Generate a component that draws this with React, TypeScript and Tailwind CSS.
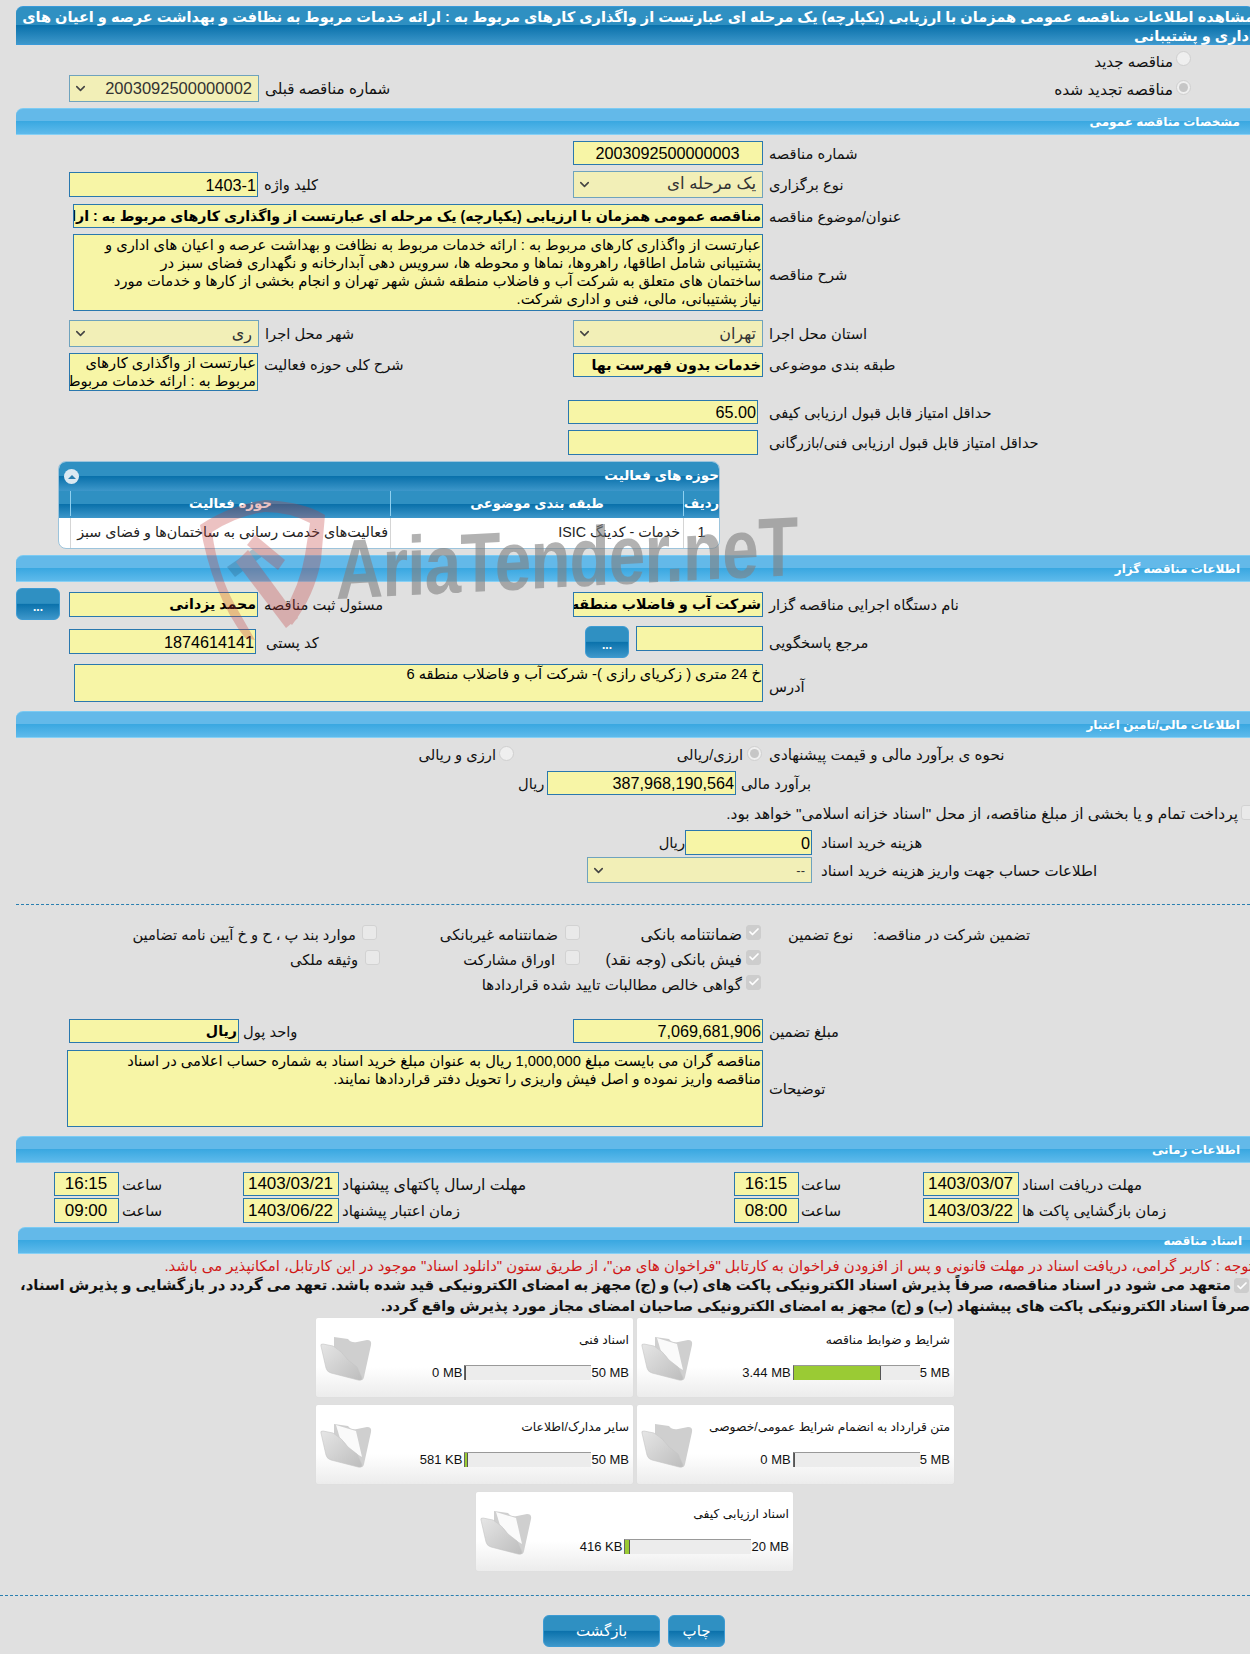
import type { ReactNode } from "react";
import { Check, ChevronDown } from "lucide-react";

const dark =
  "bg-[linear-gradient(to_bottom,#2f90c2_0%,#2f90c2_48%,#0a71ab_50%,#3d97ca_100%)]";

function Bar({ title, className = "" }: { title: string; className?: string }) {
  return (
    <div
      dir="rtl"
      className={`flex h-[27px] w-[1244px] items-center rounded-tl-[7px] rounded-tr-[7px] border-t border-b border-t-[#7ccbf3] border-b-[#86d0f5] bg-[linear-gradient(to_bottom,#63b9e9_0%,#63b9e9_48%,#3aa8e1_50%,#5ebaeb_100%)] pr-[20px] text-[12px] font-bold text-white ${className}`}
    >
      {title}
    </div>
  );
}

function Box({
  className = "",
  text = "text-[16.2px]",
  children,
}: {
  className?: string;
  text?: string;
  children?: ReactNode;
}) {
  return (
    <div
      dir="rtl"
      className={`flex shrink-0 items-center overflow-hidden border border-[#2a78ae] bg-[#f7f5a6] pr-[1px] leading-[18px] whitespace-nowrap text-black ${text} ${className}`}
    >
      {children}
    </div>
  );
}

function Select({
  className = "",
  text = "text-[16.5px]",
  children,
}: {
  className?: string;
  text?: string;
  children?: ReactNode;
}) {
  return (
    <div
      dir="rtl"
      className={`flex shrink-0 items-center justify-between border border-[#6fa3bd] bg-[#f2efb7] pr-[6px] pl-[3px] leading-none whitespace-nowrap text-[#333] ${text} ${className}`}
    >
      <span>{children}</span>
      <ChevronDown className="h-[15px] w-[15px] text-[#444]" strokeWidth={2.5} />
    </div>
  );
}

function Label({
  children,
  className = "",
  text = "text-[14.7px]",
}: {
  children: ReactNode;
  className?: string;
  text?: string;
}) {
  return (
    <span dir="rtl" className={`shrink-0 pt-[2px] whitespace-nowrap text-[#111] ${text} ${className}`}>
      {children}
    </span>
  );
}

function Radio({ on, className = "" }: { on?: boolean; className?: string }) {
  return (
    <span className={`flex h-[15px] w-[15px] shrink-0 items-center justify-center rounded-full border border-[#cfcfcf] bg-[#efefef] ${className}`}>
      {on && <span className="h-[9px] w-[9px] rounded-full bg-[#c6c6c6]" />}
    </span>
  );
}

function Tick({ on, className = "" }: { on?: boolean; className?: string }) {
  return (
    <span
      className={`flex h-[15px] w-[15px] shrink-0 items-center justify-center rounded-[3px] border ${on ? "border-[#cdcdcd] bg-[#cdcdcd]" : "border-[#d2d2d2] bg-[#e9e9e9]"} ${className}`}
    >
      {on && <Check className="h-[12px] w-[12px] text-white" strokeWidth={3.5} />}
    </span>
  );
}

function DotsButton({ className = "" }: { className?: string }) {
  return (
    <div
      className={`flex h-[32px] w-[44px] shrink-0 items-end justify-center rounded-[6px] border border-[#3d9bd3] pb-[6px] text-[12px] leading-none font-bold text-white ${dark} ${className}`}
    >
      ...
    </div>
  );
}

function Folder({ paper }: { paper?: boolean }) {
  return (
    <svg viewBox="0 0 52 48" className="h-[48px] w-[52px] shrink-0">
      <defs>
        <linearGradient id="folderFront" x1="0" y1="0" x2="1" y2="1">
          <stop offset="0" stopColor="#e6e6e6" />
          <stop offset="1" stopColor="#bdbdbd" />
        </linearGradient>
      </defs>
      <path d="M14 3 L28 5 Q31 9 37 8 L47 6 Q52 6 51 11 L44 43 Q43 47 40 46 L14 30 Z" fill="#cfcfcf" />
      {paper && <path d="M16 4 L36 10 L42 36 L22 24 Z" fill="#fafafa" />}
      <path
        d="M1 12 Q0 10 3 10 L13 12 Q22 17 28 26 L37 33 L42 44 Q42 47 38 46 L11 39 Q7 38 6 34 Z"
        fill="url(#folderFront)"
        stroke="#c4c4c4"
        strokeWidth="0.6"
        strokeLinejoin="round"
      />
    </svg>
  );
}

function DocCard({
  title,
  used,
  max,
  pct,
  paper,
}: {
  title: string;
  used: string;
  max: string;
  pct: number;
  paper?: boolean;
}) {
  return (
    <div className="flex h-[79px] w-[317px] items-center rounded-[2px] bg-[linear-gradient(to_bottom,#ffffff_0%,#ffffff_62%,#ececec_100%)] pr-[4px] pl-[4px] shadow-[0_0_1px_#cfcfcf]">
      <Folder paper={paper} />
      <div dir="rtl" className="flex h-full flex-1 flex-col pt-[12px]">
        <div className="text-[12.3px] leading-[20px] whitespace-nowrap text-[#111]">{title}</div>
        <div dir="ltr" className="mt-[15px] flex items-center justify-end gap-[2px] text-[13px] leading-none text-[#111]">
          <span>{used}</span>
          <div className="-mr-[2px] h-[15px] w-[127px] border-t border-l border-t-[#999] border-l-[#666] bg-[#ececec]">
            <div className="h-full border-r border-r-[#555] bg-[#9acb34]" style={{ width: `${pct}%` }} />
          </div>
          <span>{max}</span>
        </div>
      </div>
    </div>
  );
}

function Watermark() {
  return (
    <div className="pointer-events-none absolute top-[490px] left-[190px] z-10 flex h-[160px] w-[640px] items-center">
      <svg viewBox="0 0 150 160" className="h-[160px] w-[150px] shrink-0 opacity-30">
        <path
          d="M10 35 Q40 15 75 10 Q115 12 135 25 L131 70 Q125 105 102 135 L92 125 Q110 95 115 65 L120 33 Q100 22 75 22 Q48 25 22 42 Q28 85 45 115 L65 150 L55 148 Q22 105 10 35 Z"
          fill="#c23a3a"
        />
        <path d="M37 77 L72 53 L78 62 L45 87 Z" fill="#2f5f80" />
        <path d="M58 60 L108 128 L96 138 L46 72 Z" fill="#c23a3a" />
        <path d="M65 45 L95 70 L88 80 L57 55 Z" fill="#c23a3a" />
      </svg>
      <span className="-ml-[4px] origin-left text-[84px] leading-none font-bold tracking-[-1px] whitespace-nowrap text-[#808080] opacity-60 [transform:skewY(-3deg)_scaleX(0.78)]">
        AriaTender.neT
      </span>
    </div>
  );
}

const persian = "text-[14.7px]";
const strong = "text-[14.2px] font-semibold";

export default function App() {
  return (
    <div className="relative h-[1654px] w-[1250px] overflow-hidden bg-[#e0e0e0] pt-[6px] font-['Liberation_Sans','DejaVu_Sans',sans-serif]">
      <Watermark />

      <div
        dir="rtl"
        className={`ml-[16px] h-[39px] w-[1238px] rounded-tl-[7px] rounded-tr-[7px] border-t border-b border-[#3a9ad9] pt-[1px] text-[14.55px] leading-[19px] font-bold whitespace-nowrap text-white ${dark}`}
      >
        مشاهده اطلاعات مناقصه عمومی همزمان با ارزیابی (یکپارچه) یک مرحله ای عبارتست از واگذاری کارهای مربوط به : ارائه خدمات مربوط به نظافت و بهداشت عرصه و اعیان های
        <br />
        اداری و پشتیبانی
      </div>

      <div className="mt-[6px] flex h-[21px] justify-end pr-[59px]">
        <div dir="rtl" className="flex w-[140px] items-start gap-[3px]">
          <Radio />
          <Label className="-mt-[2px]" text="text-[15px]">مناقصه جدید</Label>
        </div>
      </div>
      <div className="mt-[3px] flex h-[27px] items-center pl-[69px]">
        <Select className="h-[27px] w-[190px]">2003092500000002</Select>
        <Label className="ml-[6px]" text="text-[15.2px]">شماره مناقصه قبلی</Label>
        <div dir="rtl" className="ml-auto flex w-[300px] items-center gap-[3px] pr-[59px]">
          <Radio on className="-mt-[2px]" />
          <Label text="text-[15.4px]">مناقصه تجدید شده</Label>
        </div>
      </div>

      <Bar title="مشخصات مناقصه عمومی" className="mt-[6px] ml-[16px]" />

      <div className="mt-[6px] flex h-[24px] items-center pl-[573px]">
        <Box className="h-[24px] w-[190px] justify-center">2003092500000003</Box>
        <Label className="ml-[6px]">شماره مناقصه</Label>
      </div>

      <div className="mt-[6px] flex h-[27px] items-center pl-[69px]">
        <Box className="h-[25px] w-[189px]">1403-1</Box>
        <Label className="ml-[6px]">کلید واژه</Label>
        <div className="ml-auto flex w-[677px] items-center">
          <Select className="h-[27px] w-[190px]" text="text-[16.6px]">یک مرحله ای</Select>
          <Label className="ml-[6px]">نوع برگزاری</Label>
        </div>
      </div>

      <div className="mt-[6px] flex h-[24px] items-center pl-[73px]">
        <Box className="h-[24px] w-[690px]" text={strong}>
          مناقصه عمومی همزمان با ارزیابی (یکپارچه) یک مرحله ای عبارتست از واگذاری کارهای مربوط به : ارائه خدمات
        </Box>
        <Label className="ml-[6px]">عنوان/موضوع مناقصه</Label>
      </div>

      <div className="mt-[6px] flex h-[77px] items-center pl-[73px]">
        <Box className="h-[77px] w-[690px] items-start pt-[1px]" text={persian}>
          <div>
            عبارتست از واگذاری کارهای مربوط به : ارائه خدمات مربوط به نظافت و بهداشت عرصه و اعیان های اداری و
            <br />
            پشتیبانی شامل اطاقها، راهروها، نماها و محوطه ها، سرویس دهی آبدارخانه و نگهداری فضای سبز در
            <br />
            ساختمان های متعلق به شرکت آب و فاضلاب منطقه شش شهر تهران و انجام بخشی از کارها و خدمات مورد
            <br />
            نیاز پشتیبانی، مالی، فنی و اداری شرکت.
          </div>
        </Box>
        <Label className="mt-[3px] ml-[6px]">شرح مناقصه</Label>
      </div>

      <div className="mt-[9px] flex h-[27px] items-center pl-[69px]">
        <Select className="h-[27px] w-[190px]" text="text-[16px]">ری</Select>
        <Label className="ml-[6px]">شهر محل اجرا</Label>
        <div className="ml-auto flex w-[677px] items-center">
          <Select className="h-[27px] w-[190px]" text="text-[16px]">تهران</Select>
          <Label className="ml-[6px]">استان محل اجرا</Label>
        </div>
      </div>

      <div className="mt-[6px] flex h-[38px] items-start pl-[69px]">
        <Box className="h-[38px] w-[189px] items-start" text={persian}>
          <div>
            عبارتست از واگذاری کارهای
            <br />
            مربوط به : ارائه خدمات مربوط
          </div>
        </Box>
        <Label className="-mt-[1px] ml-[6px]">شرح کلی حوزه فعالیت</Label>
        <div className="ml-auto flex w-[677px] items-start">
          <Box className="h-[24px] w-[190px]" text={strong}>خدمات بدون فهرست بها</Box>
          <Label className="-mt-[1px] ml-[6px]" text="text-[15px]">طبقه بندی موضوعی</Label>
        </div>
      </div>

      <div className="mt-[9px] flex h-[24px] items-center pl-[568px]">
        <Box className="h-[24px] w-[190px]">65.00</Box>
        <Label className="ml-[11px]">حداقل امتیاز قابل قبول ارزیابی کیفی</Label>
      </div>
      <div className="mt-[6px] flex h-[25px] items-center pl-[568px]">
        <Box className="h-[25px] w-[190px]" />
        <Label className="ml-[11px]">حداقل امتیاز قابل قبول ارزیابی فنی/بازرگانی</Label>
      </div>

      <div className="mt-[6px] ml-[58px] w-[662px] overflow-hidden rounded-[8px] border border-[#9cc4dc] bg-white">
        <div dir="rtl" className={`flex h-[29px] items-center justify-between text-[13.5px] font-bold text-white ${dark}`}>
          <span>حوزه های فعالیت</span>
          <span className="mr-[2px] ml-[5px] flex h-[15px] w-[15px] items-center justify-center rounded-full bg-[#dbe9f2]">
            <span className="h-0 w-0 border-r-[4px] border-b-[4px] border-l-[4px] border-r-transparent border-b-[#2a7fb0] border-l-transparent" />
          </span>
        </div>
        <div dir="rtl" className={`flex h-[27px] pb-[2px] text-[13.3px] font-bold text-white ${dark}`}>
          <div className="flex w-[36px] items-center justify-center border-l border-l-[#8fd0f0]">ردیف</div>
          <div className="flex w-[293px] items-center justify-center border-l border-l-[#8fd0f0]">طبقه بندی موضوعی</div>
          <div className="flex w-[320px] items-center justify-center border-l border-l-[#8fd0f0]">حوزه فعالیت</div>
        </div>
        <div dir="rtl" className="flex h-[30px] text-[14.3px] text-[#222]">
          <div className="flex w-[36px] items-center justify-center border-l border-l-[#d5d5d5]">1</div>
          <div className="flex w-[293px] items-center border-l border-l-[#d5d5d5] pr-[3px]">خدمات - کدینگ ISIC</div>
          <div className="flex w-[320px] items-center border-l border-l-[#d5d5d5] pr-[2px] whitespace-nowrap">فعالیت‌های خدمت رسانی به ساختمان‌ها و فضای سبز</div>
        </div>
      </div>

      <Bar title="اطلاعات مناقصه گزار" className="mt-[6px] ml-[16px]" />

      <div className="mt-[6px] flex h-[32px] items-center pl-[16px]">
        <DotsButton />
        <Box className="ml-[9px] h-[25px] w-[189px]" text={strong}>محمد یزدانی</Box>
        <Label className="ml-[6px]">مسئول ثبت مناقصه</Label>
        <div className="ml-auto flex w-[677px] items-center">
          <Box className="h-[25px] w-[190px]" text={strong}>شرکت آب و فاضلاب منطقه</Box>
          <Label className="ml-[6px]">نام دستگاه اجرایی مناقصه گزار</Label>
        </div>
      </div>

      <div className="mt-[6px] flex h-[32px] items-start pl-[69px]">
        <Box className="mt-[3px] h-[25px] w-[187px]">1874614141</Box>
        <Label className="mt-[4px] ml-[10px]">کد پستی</Label>
        <div className="ml-auto flex w-[665px] items-start">
          <DotsButton />
          <Box className="ml-[7px] h-[25px] w-[127px]" />
          <Label className="mt-[4px] ml-[6px]">مرجع پاسخگویی</Label>
        </div>
      </div>

      <div className="mt-[6px] flex h-[38px] items-start pl-[74px]">
        <Box className="h-[38px] w-[689px] items-start" text={persian}>خ 24 متری ( زکریای رازی )- شرکت آب و فاضلاب منطقه 6</Box>
        <Label className="mt-[10px] ml-[6px]">آدرس</Label>
      </div>

      <Bar title="اطلاعات مالی/تامین اعتبار" className="mt-[9px] ml-[16px]" />

      <div className="mt-[8px] flex h-[20px] items-center pl-[420px]">
        <Label className="-mt-[3px] w-[76px]">ارزی و ریالی</Label>
        <Radio className="-mt-[5px] ml-[3px]" />
        <Label className="-mt-[3px] w-[229px]">ارزی/ریالی</Label>
        <Radio on className="-mt-[5px] ml-[4px]" />
        <Label className="-mt-[3px] ml-[7px]" text="text-[15.2px]">نحوه ی برآورد مالی و قیمت پیشنهادی</Label>
      </div>

      <div className="mt-[5px] flex h-[24px] items-center pl-[518px]">
        <Label className="w-[29px] text-left">ریال</Label>
        <Box className="h-[24px] w-[189px]">387,968,190,564</Box>
        <Label className="ml-[5px]">برآورد مالی</Label>
      </div>

      <div className="mt-[9px] flex h-[20px] items-center justify-end">
        <Label className="-mt-[3px] mr-[3px]" text="text-[15.4px]">پرداخت تمام و یا بخشی از مبلغ مناقصه، از محل "اسناد خزانه اسلامی" خواهد بود.</Label>
        <span className="-mt-[4px] -mr-[3px] w-[12px] overflow-hidden">
          <Tick />
        </span>
      </div>

      <div className="mt-[6px] flex h-[25px] items-center pl-[662px]">
        <Label className="w-[23px] text-left">ریال</Label>
        <Box className="h-[25px] w-[127px]">0</Box>
        <Label className="ml-[9px]">هزینه خرید اسناد</Label>
      </div>
      <div className="mt-[2px] flex h-[26px] items-center pl-[587px]">
        <Select className="h-[26px] w-[225px]" text="text-[13px]">--</Select>
        <Label className="ml-[9px]" text="text-[15px]">اطلاعات حساب جهت واریز هزینه خرید اسناد</Label>
      </div>

      <div className="mt-[21px] ml-[16px] border-t border-dashed border-t-[#2a7fb0]" />

      <div className="mt-[19px] flex h-[20px] items-center pl-[130px]">
        <Label className="w-[226px]">موارد بند پ ، ح و خ آیین نامه تضامین</Label>
        <Tick className="-mt-[4px] ml-[6px]" />
        <Label className="w-[181px]" text="text-[15px]">ضمانتنامه غیربانکی</Label>
        <Tick className="-mt-[4px] ml-[7px]" />
        <Label className="w-[162px]" text="text-[15.6px]">ضمانتنامه بانکی</Label>
        <Tick on className="-mt-[4px] ml-[4px]" />
        <Label className="ml-[27px] w-[85px] text-left">نوع تضمین</Label>
        <Label>تضمین شرکت در مناقصه:</Label>
      </div>
      <div className="mt-[5px] flex h-[20px] items-center pl-[130px]">
        <Label className="w-[228px]">وثیقه ملکی</Label>
        <Tick className="-mt-[4px] ml-[7px]" />
        <Label className="w-[175px]">اوراق مشارکت</Label>
        <Tick className="-mt-[4px] ml-[10px]" />
        <Label className="w-[162px]" text="text-[15.6px]">فیش بانکی (وجه نقد)</Label>
        <Tick on className="-mt-[4px] ml-[4px]" />
      </div>
      <div className="mt-[5px] flex h-[20px] items-center pl-[480px]">
        <Label className="w-[262px]" text="text-[15px]">گواهی خالص مطالبات تایید شده قراردادها</Label>
        <Tick on className="-mt-[4px] ml-[4px]" />
      </div>

      <div className="mt-[25px] flex h-[24px] items-center pl-[69px]">
        <Box className="h-[24px] w-[170px]" text={strong}>ریال</Box>
        <Label className="ml-[4px]">واحد پول</Label>
        <div className="ml-auto flex w-[677px] items-center">
          <Box className="h-[24px] w-[190px]">7,069,681,906</Box>
          <Label className="ml-[6px]">مبلغ تضمین</Label>
        </div>
      </div>

      <div className="mt-[7px] flex h-[77px] items-center pl-[67px]">
        <Box className="h-[77px] w-[696px] items-start pt-[1px]" text={persian}>
          <div>
            مناقصه گران می بایست مبلغ 1,000,000 ریال به عنوان مبلغ خرید اسناد به شماره حساب اعلامی در اسناد
            <br />
            مناقصه واریز نموده و اصل فیش واریزی را تحویل دفتر قراردادها نمایند.
          </div>
        </Box>
        <Label className="ml-[6px]">توضیحات</Label>
      </div>

      <Bar title="اطلاعات زمانی" className="mt-[9px] ml-[16px]" />

      <div className="mt-[9px] flex h-[24px] items-center pl-[54px]">
        <Box className="h-[24px] w-[65px] justify-center" text="text-[17px]">16:15</Box>
        <Label className="ml-[3px] w-[121px] text-left">ساعت</Label>
        <Box className="h-[24px] w-[96px] justify-center" text="text-[17px]">1403/03/21</Box>
        <Label className="ml-[3px] w-[392px] text-left" text="text-[15.8px]">مهلت ارسال پاکتهای پیشنهاد</Label>
        <Box className="h-[24px] w-[65px] justify-center" text="text-[17px]">16:15</Box>
        <Label className="ml-[2px] w-[122px] text-left">ساعت</Label>
        <Box className="h-[24px] w-[96px] justify-center" text="text-[17px]">1403/03/07</Box>
        <Label className="ml-[3px]" text="text-[15px]">مهلت دریافت اسناد</Label>
      </div>
      <div className="mt-[2px] flex h-[25px] items-center pl-[54px]">
        <Box className="h-[25px] w-[65px] justify-center" text="text-[17px]">09:00</Box>
        <Label className="ml-[3px] w-[121px] text-left">ساعت</Label>
        <Box className="h-[25px] w-[96px] justify-center" text="text-[17px]">1403/06/22</Box>
        <Label className="ml-[3px] w-[392px] text-left" text="text-[15px]">زمان اعتبار پیشنهاد</Label>
        <Box className="h-[25px] w-[65px] justify-center" text="text-[17px]">08:00</Box>
        <Label className="ml-[2px] w-[122px] text-left">ساعت</Label>
        <Box className="h-[25px] w-[96px] justify-center" text="text-[17px]">1403/03/22</Box>
        <Label className="ml-[3px]" text="text-[15px]">زمان بازگشایی پاکت ها</Label>
      </div>

      <Bar title="اسناد مناقصه" className="mt-[4px] ml-[18px]" />

      <div dir="rtl" className="mt-[4px] mr-[-3px] h-[17px] text-[14.9px] leading-[17px] whitespace-nowrap text-[#d01818]">
        توجه : کاربر گرامی، دریافت اسناد در مهلت قانونی و پس از افزودن فراخوان به کارتابل "فراخوان های من"، از طریق ستون "دانلود اسناد" موجود در این کارتابل، امکانپذیر می باشد.
      </div>
      <div dir="rtl" className="h-[43px] leading-[21px] font-bold whitespace-nowrap text-[#111]">
        <div className="flex items-center gap-[3px] pr-[1px] text-[14.83px]">
          <Tick on />
          <span>متعهد می شود در اسناد مناقصه، صرفاً پذیرش اسناد الکترونیکی پاکت های (ب) و (ج) مجهز به امضای الکترونیکی قید شده باشد. تعهد می گردد در بازگشایی و پذیرش اسناد،</span>
        </div>
        <div className="text-[14.6px]">صرفاً اسناد الکترونیکی پاکت های پیشنهاد (ب) و (ج) مجهز به امضای الکترونیکی صاحبان امضای مجاز مورد پذیرش واقع گردد.</div>
      </div>

      <div className="flex gap-[4px] pl-[316px]">
        <DocCard title="اسناد فنی" used="0 MB" max="50 MB" pct={0} />
        <DocCard title="شرایط و ضوابط مناقصه" used="3.44 MB" max="5 MB" pct={69} paper />
      </div>
      <div className="mt-[8px] flex gap-[4px] pl-[316px]">
        <DocCard title="سایر مدارک/اطلاعات" used="581 KB" max="50 MB" pct={2} paper />
        <DocCard title="متن قرارداد به انضمام شرایط عمومی/خصوصی" used="0 MB" max="5 MB" pct={0} />
      </div>
      <div className="mt-[8px] flex pl-[476px]">
        <DocCard title="اسناد ارزیابی کیفی" used="416 KB" max="20 MB" pct={4} paper />
      </div>

      <div className="mt-[24px] border-t border-dashed border-t-[#2a7fb0]" />

      <div className="mt-[19px] flex justify-center gap-[8px] pl-[18px] text-[15px] text-white">
        <div className={`flex h-[32px] w-[117px] items-center justify-center rounded-[6px] border border-[#3d9bd3] ${dark}`}>بازگشت</div>
        <div className={`flex h-[32px] w-[57px] items-center justify-center rounded-[6px] border border-[#3d9bd3] ${dark}`}>چاپ</div>
      </div>
    </div>
  );
}
